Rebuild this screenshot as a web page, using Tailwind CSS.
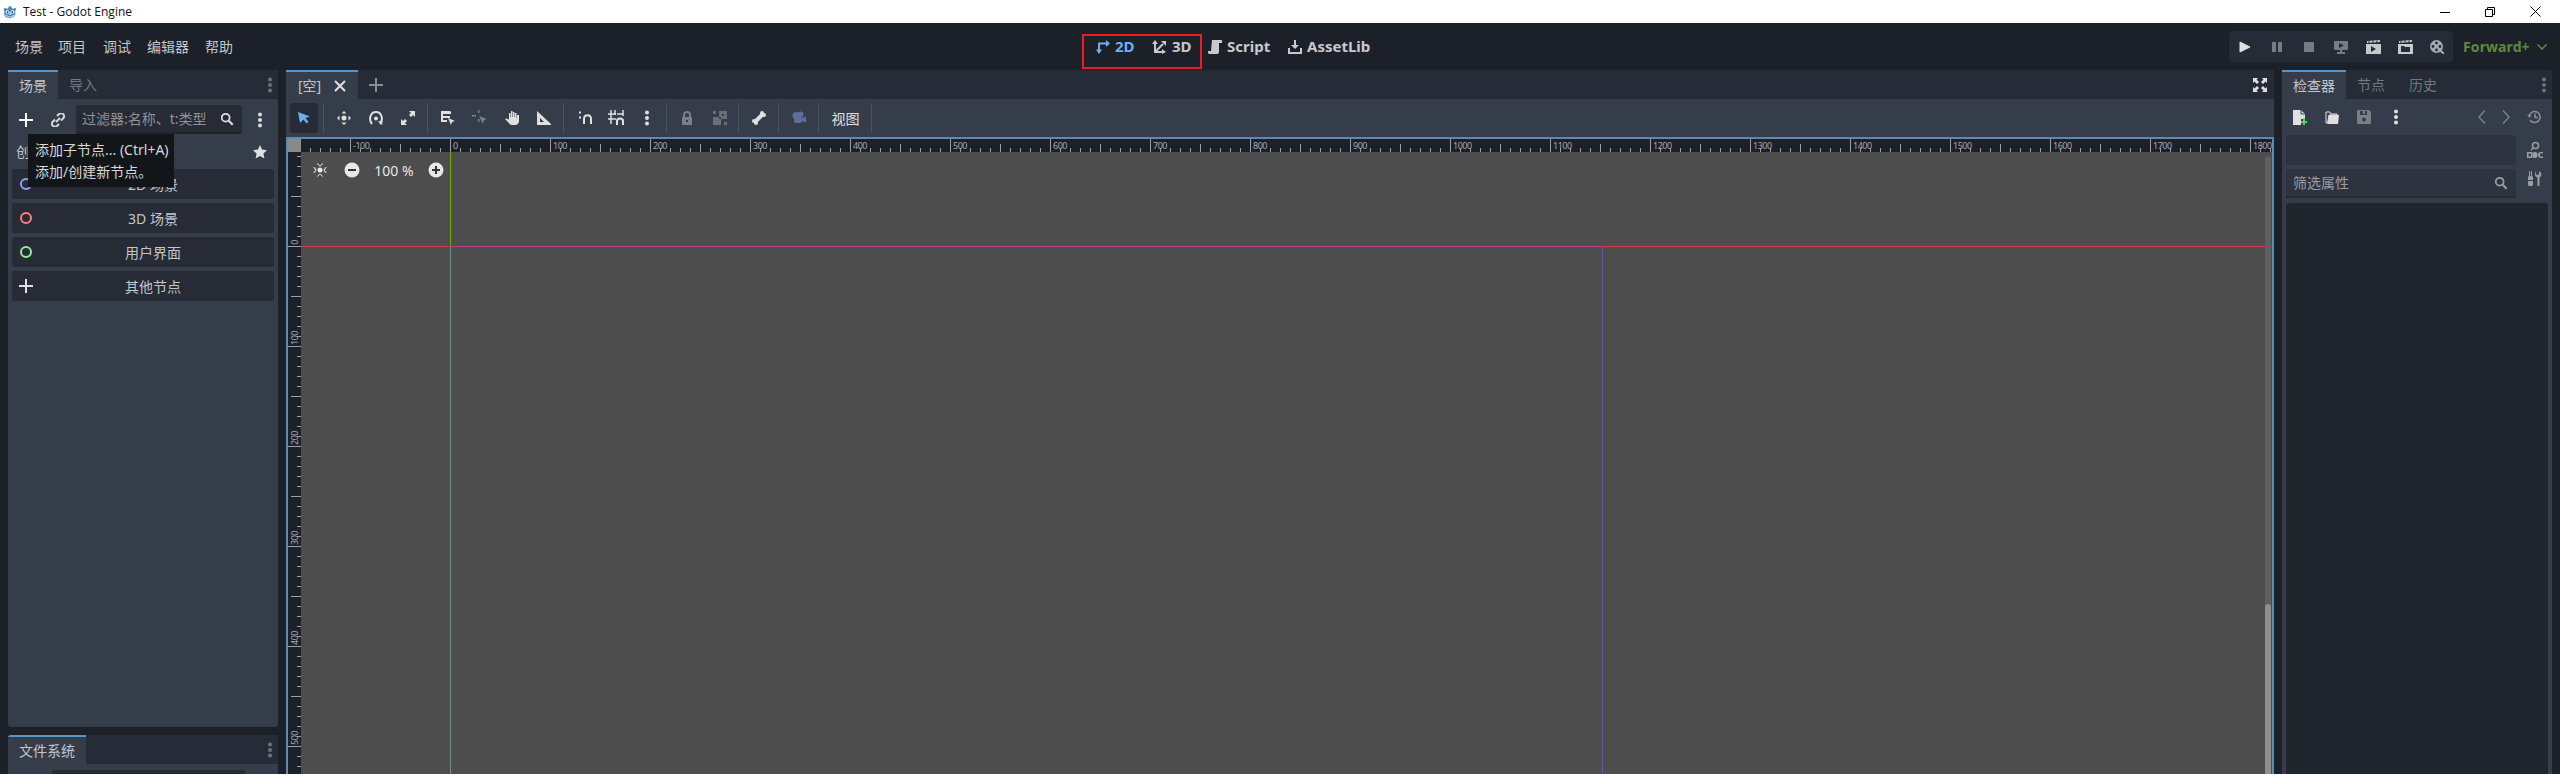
<!DOCTYPE html>
<html lang="zh-CN">

<head>
    <meta charset="UTF-8" />
    <title>Test - Godot Engine</title>
    <script src="https://cdn.jsdelivr.net/npm/@tailwindcss/browser@4"></script>
</head>

<body class="w-[2560px] h-[774px] overflow-hidden bg-[#1c2028] font-['Noto_Sans','Noto_Sans_CJK_SC',sans-serif] text-[14px] text-[#c4c6ca]">

    <svg class="hidden">
        <symbol id="kebab" viewBox="0 0 16 16">
            <circle cx="8" cy="2.5" r="2" fill="currentColor" />
            <circle cx="8" cy="8" r="2" fill="currentColor" />
            <circle cx="8" cy="13.5" r="2" fill="currentColor" />
        </symbol>
        <symbol id="search" viewBox="0 0 16 16">
            <circle cx="6.5" cy="6.5" r="4.5" fill="none" stroke="currentColor" stroke-width="2" />
            <path d="M10 10l4.5 4.5" stroke="currentColor" stroke-width="2.4" />
        </symbol>
    </svg>

    <!-- Заголовок окна -->
    <div class="h-[23px] bg-white flex items-center justify-between text-[12px] text-[#101018] font-['Open_Sans',sans-serif]">
        <div class="flex items-center pl-[3px] gap-[6px]">
            <svg class="w-[14px] h-[14px]" viewBox="0 0 16 16">
                <path d="M1 4l2-1 1 1.500 2-1 .6-2h2.800l.6 2 2 1 1-1.500 2 1-1 3.500v4c-1 2-3.500 3.500-6.500 3.500S2 13.500 1.500 11.500v-4z" fill="#478cbf" />
                <circle cx="5" cy="8" r="2" fill="#fff" />
                <circle cx="11" cy="8" r="2" fill="#fff" />
                <circle cx="5.300" cy="8.200" r="1" fill="#333" />
                <circle cx="10.700" cy="8.200" r="1" fill="#333" />
                <path d="M7 8.500h2v2H7zM2.500 12l3 .5v1h5v-1l3-.5" fill="none" stroke="#fff" stroke-width=".8" />
            </svg>
            <span>Test - Godot Engine</span>
        </div>
        <div class="flex items-center pr-[19px] gap-[35px] text-black">
            <svg class="w-[10px] h-[10px]" viewBox="0 0 10 10"><path d="M0 5.500h10" stroke="currentColor" /></svg>
            <svg class="w-[10px] h-[10px]" viewBox="0 0 10 10" fill="none" stroke="currentColor"><path d="M.5 2.500h7v7h-7zM2.500 2.500v-2h7v7h-2" /></svg>
            <svg class="w-[11px] h-[11px]" viewBox="0 0 11 11" fill="none" stroke="currentColor"><path d="M.5.500l10 10M10.500.500l-10 10" /></svg>
        </div>
    </div>

    <!-- Главное меню -->
    <header class="h-[47px] relative flex items-center justify-between pl-[15px] pr-[13px]">
        <nav class="flex">
            <span class="w-[43px]">场景</span>
            <span class="w-[45px]">项目</span>
            <span class="w-[44px]">调试</span>
            <span class="w-[58px]">编辑器</span>
            <span>帮助</span>
        </nav>

        <div class="absolute left-[1082px] top-[11px] w-[120px] h-[35px] border-2 border-[#ed1c24]"></div>
        <div class="absolute left-[1096px] top-[11px] h-[25px] flex items-center font-bold text-[15px]">
            <div class="flex items-center gap-[5px] w-[56px] text-[#6ab0f0]">
                <svg class="w-[14px] h-[14px]" viewBox="0 0 14 14" fill="none" stroke="currentColor" stroke-width="2"><path d="M3 13V3.500h9" /><path d="M10 0l4 3.500-4 3.500z" fill="currentColor" stroke="none" /><path d="M0 9.500h6L3 14z" fill="currentColor" stroke="none" /></svg>
                <span>2D</span>
            </div>
            <div class="flex items-center gap-[6px] w-[56px] text-[#c7c9cd]">
                <svg class="w-[14px] h-[14px]" viewBox="0 0 14 14" fill="none" stroke="currentColor" stroke-width="2"><path d="M3 3v9h9M3 12l8-8" /><path d="M0 4l3-4 3 4zM10 9l4 3-4 2zM9 1h5v5z" fill="currentColor" stroke="none" /></svg>
                <span>3D</span>
            </div>
            <div class="flex items-center gap-[5px] w-[80px] text-[#c7c9cd]">
                <svg class="w-[14px] h-[14px]" viewBox="0 0 14 14"><path d="M4 0h10v3h-3v9c0 1-1 2-2 2H1c-1 0-1-2-1-3h3z" fill="currentColor" /></svg>
                <span>Script</span>
            </div>
            <div class="flex items-center gap-[5px] text-[#c7c9cd]">
                <svg class="w-[14px] h-[14px]" viewBox="0 0 14 14" fill="currentColor"><path d="M6 0h2v5h3l-4 4-4-4h3zM0 8h2v4h10V8h2v6H0z" /></svg>
                <span>AssetLib</span>
            </div>
        </div>

        <div class="flex items-center">
            <div class="w-[224px] h-[31px] rounded bg-[#262c37] flex items-center text-[#c7c9cd]">
                <span class="w-[32px] flex justify-center"><svg class="w-[14px] h-[14px]" viewBox="0 0 14 14"><path d="M2 2l10 5-10 5z" fill="#e0e0e0" stroke="#e0e0e0" /></svg></span>
                <span class="w-[32px] flex justify-center"><svg class="w-[14px] h-[14px] opacity-50" viewBox="0 0 14 14" fill="currentColor"><path d="M2 2h4v10H2zM8 2h4v10H8z" /></svg></span>
                <span class="w-[32px] flex justify-center"><svg class="w-[14px] h-[14px] opacity-50" viewBox="0 0 14 14" fill="currentColor"><rect x="2" y="2" width="10" height="10" rx="1" /></svg></span>
                <span class="w-[32px] flex justify-center"><svg class="w-[14px] h-[14px] opacity-50" viewBox="0 0 14 14"><path d="M1 1h12c.5 0 1 .5 1 1v7c0 .5-.5 1-1 1H8v2h3v2H3v-2h3v-2H1c-.5 0-1-.5-1-1V2c0-.5.500-1 1-1z" fill="currentColor" /><path d="M5 3l5 2.500L5 8z" fill="#262c37" /></svg></span>
                <span class="w-[32px] flex justify-center"><svg class="w-[15px] h-[14px]" viewBox="0 0 15 14"><path d="M0 4h15v10H0z" fill="currentColor" /><path d="M1 1l13-1v2L1 3z" fill="currentColor" /><path d="M3 .5v2.500M7 .5v2.500M11 .5v2.500" stroke="#262c37" /><path d="M5 6l5 3-5 3z" fill="#262c37" /></svg></span>
                <span class="w-[32px] flex justify-center"><svg class="w-[15px] h-[14px]" viewBox="0 0 15 14"><path d="M0 4h15v10H0z" fill="currentColor" /><path d="M1 1l13-1v2L1 3z" fill="currentColor" /><path d="M3 .5v2.500M7 .5v2.500M11 .5v2.500" stroke="#262c37" /><path d="M3 6h3l1 1h5v5H3z" fill="#262c37" /></svg></span>
                <span class="w-[32px] flex justify-center"><svg class="w-[14px] h-[14px] opacity-80" viewBox="0 0 14 14"><circle cx="6.500" cy="6.500" r="6.500" fill="currentColor" /><circle cx="6.500" cy="3" r="1.400" fill="#262c37" /><circle cx="3" cy="6.500" r="1.400" fill="#262c37" /><circle cx="10" cy="6.500" r="1.400" fill="#262c37" /><circle cx="6.500" cy="10" r="1.400" fill="#262c37" /><path d="M10 10l4 4" stroke="currentColor" stroke-width="2" /></svg></span>
            </div>
            <span class="ml-[10px] w-[66px] font-bold text-[14px] tracking-[0.1px] text-[#5c8c3a] whitespace-nowrap">Forward+</span>
            <svg class="w-[10px] h-[6px] ml-[8px] text-[#5c8c3a]" viewBox="0 0 10 6" fill="none" stroke="currentColor" stroke-width="1.500"><path d="M.5.500L5 5 9.500.500" /></svg>
        </div>
    </header>

    <main class="flex h-[704px] pl-2 gap-2">

        <!-- Левая колонка: сцена и файлы -->
        <div class="w-[270px] h-[704px] flex flex-col gap-2 shrink-0 overflow-hidden">
            <section class="h-[657px] shrink-0 bg-[#363d4a] rounded-b-[3px] relative flex flex-col">
                <div class="h-[29px] bg-[#262c37] flex justify-between rounded-t-[3px]">
                    <div class="flex">
                        <span class="w-[50px] h-[29px] border-t-2 border-[#5a95c8] bg-[#363d4a] text-center leading-[27px]">场景</span>
                        <span class="w-[50px] text-center leading-[29px] text-[#717680]">导入</span>
                    </div>
                    <svg class="w-[16px] h-[16px] mt-[7px] text-[#6f7278]"><use href="#kebab" /></svg>
                </div>
                <div class="h-[35px] flex items-center pl-[11px] pt-[6px] pb-[0px]">
                    <svg class="w-[14px] h-[14px] text-white" viewBox="0 0 14 14"><path d="M6 0h2v6h6v2H8v6H6V8H0V6h6z" fill="currentColor" /></svg>
                    <svg class="w-[14px] h-[14px] ml-[18px] text-[#d5d6d8]" viewBox="0 0 14 14" fill="none" stroke="currentColor" stroke-width="2"><path d="M6 3l2-2c1-1 3.500-1 4.500.5s.5 3-.5 4L10 7.500M8 11l-2 2c-1 1-3 1-4.500-.5S1 9.500 2 8.500L4 6.500M5 9l4-4" /></svg>
                    <div class="ml-[11px] w-[166px] h-[29px] bg-[#262b36] rounded-[3px] flex items-center justify-between pl-[6px] pr-[8px] text-[#8f9297] border-b-2 border-[#20242c]">
                        <span>过滤器:名称、t:类型</span>
                        <svg class="w-[14px] h-[14px] text-[#e0e0e0]"><use href="#search" /></svg>
                    </div>
                    <svg class="w-[16px] h-[16px] ml-[10px] text-[#dcdcdc]"><use href="#kebab" /></svg>
                </div>
                <div class="flex items-center justify-between h-[35px] pl-[8px] pr-[11px] text-[#c4c6ca]">
                    <span>创建根节点：</span>
                    <svg class="w-[14px] h-[14px] text-[#e0e0e0]" viewBox="0 0 14 14"><path d="M7 0l2.100 4.600 4.900.6-3.600 3.400 1 4.900L7 11l-4.400 2.500 1-4.900L0 5.200l4.900-.6z" fill="currentColor" /></svg>
                </div>
                <div class="flex flex-col gap-1 px-1">
                    <div class="h-[30px] bg-[#262b36] rounded-[3px] relative flex items-center justify-center pl-[20px]">
                        <svg class="absolute left-[7px] w-[14px] h-[14px]" viewBox="0 0 14 14"><circle cx="7" cy="7" r="5" fill="none" stroke="#8da5f3" stroke-width="2" /></svg>
                        <span>2D 场景</span>
                    </div>
                    <div class="h-[30px] bg-[#262b36] rounded-[3px] relative flex items-center justify-center pl-[20px]">
                        <svg class="absolute left-[7px] w-[14px] h-[14px]" viewBox="0 0 14 14"><circle cx="7" cy="7" r="5" fill="none" stroke="#fc7f7f" stroke-width="2" /></svg>
                        <span>3D 场景</span>
                    </div>
                    <div class="h-[30px] bg-[#262b36] rounded-[3px] relative flex items-center justify-center pl-[20px]">
                        <svg class="absolute left-[7px] w-[14px] h-[14px]" viewBox="0 0 14 14"><circle cx="7" cy="7" r="5" fill="none" stroke="#8eef97" stroke-width="2" /></svg>
                        <span>用户界面</span>
                    </div>
                    <div class="h-[30px] bg-[#262b36] rounded-[3px] relative flex items-center justify-center pl-[20px]">
                        <svg class="absolute left-[7px] w-[14px] h-[14px] text-[#e0e0e0]" viewBox="0 0 14 14"><path d="M6 0h2v6h6v2H8v6H6V8H0V6h6z" fill="currentColor" /></svg>
                        <span>其他节点</span>
                    </div>
                </div>

                <!-- Подсказка -->
                <div class="absolute left-[20px] top-[64px] w-[146px] h-[53px] bg-[#131619] text-[#d9d9d9] pl-[7px] pt-[5px] leading-[22px] whitespace-nowrap">
                    <p>添加子节点... (Ctrl+A)</p>
                    <p>添加/创建新节点。</p>
                </div>
            </section>

            <section class="h-[39px] shrink-0 bg-[#363d4a] rounded-t-[3px] overflow-hidden">
                <div class="h-[29px] bg-[#262c37] flex justify-between">
                    <span class="w-[78px] h-[29px] border-t-2 border-[#5a95c8] bg-[#363d4a] text-center leading-[27px]">文件系统</span>
                    <svg class="w-[16px] h-[16px] mt-[7px] text-[#6f7278]"><use href="#kebab" /></svg>
                </div>
                <div class="ml-[44px] mt-[6px] w-[194px] h-[10px] bg-[#262b36] rounded-t-[3px]"></div>
            </section>
        </div>

        <!-- Центр: 2D-редактор -->
        <div class="w-[1988px] flex flex-col shrink-0 rounded-t-[3px]">
            <div class="h-[29px] bg-[#262c37] flex items-center justify-between pr-[7px]">
                <div class="flex items-center">
                    <div class="w-[72px] h-[29px] border-t-2 border-[#5a95c8] bg-[#363d4a] flex items-center pl-[12px] gap-[13px]">
                        <span>[空]</span>
                        <svg class="w-[12px] h-[12px] text-[#e0e0e0]" viewBox="0 0 12 12"><path d="M1 1l10 10M11 1L1 11" stroke="currentColor" stroke-width="2" /></svg>
                    </div>
                    <svg class="w-[14px] h-[14px] ml-[11px] text-[#8a8d93]" viewBox="0 0 14 14"><path d="M6 0h2v6h6v2H8v6H6V8H0V6h6z" fill="currentColor" /></svg>
                </div>
                <svg class="w-[14px] h-[14px] text-[#e0e0e0]" viewBox="0 0 14 14" fill="currentColor"><path d="M0 0h5L3.500 1.500 6 4 4 6 1.500 3.500 0 5zM14 0v5l-1.500-1.500L10 6 8 4l2.500-2.500L9 0zM0 14V9l1.500 1.500L4 8l2 2-2.500 2.500L5 14zM14 14H9l1.500-1.500L8 10l2-2 2.500 2.500L14 9z" /></svg>
            </div>

            <!-- Панель инструментов -->
            <div class="h-[38px] bg-[#363d4a] flex items-center pl-[4px] text-[#e0e0e0]">
                <div class="w-[28px] h-[30px] bg-[#262b36] rounded-[3px] flex items-center justify-center">
                    <svg class="w-[14px] h-[14px] text-[#6ab0f0]" viewBox="0 0 14 14"><path d="M1 1l12 4.500-4.500 1.500 3 4-2 1.500-3-4L3 12z" fill="currentColor" /></svg>
                </div>
                <i class="w-px h-[30px] bg-[#4a515e] ml-[5px]"></i>
                <span class="w-[32px] ml-[4px] flex justify-center">
                    <svg class="w-[14px] h-[14px]" viewBox="0 0 14 14" fill="currentColor"><path d="M7 0l2.500 2.500h-5zM7 14l-2.500-2.500h5zM0 7l2.500-2.500v5zM14 7l-2.500 2.500v-5z" /><circle cx="7" cy="7" r="2.500" /></svg>
                </span>
                <span class="w-[32px] flex justify-center">
                    <svg class="w-[14px] h-[14px]" viewBox="0 0 14 14"><path d="M3 13C-.5 9 1 1 7 1s7.500 8 4 12" fill="none" stroke="currentColor" stroke-width="2" /><path d="M9 10.500l4-1 .5 4.500z" fill="currentColor" /><circle cx="7" cy="7.500" r="2" fill="currentColor" /></svg>
                </span>
                <span class="w-[32px] flex justify-center">
                    <svg class="w-[14px] h-[14px]" viewBox="0 0 14 14" fill="currentColor"><path d="M8 0h6v6l-2-2-2 2-2-2 2-2zM0 14V8l2 2 2-2 2 2-2 2 2 2z" /></svg>
                </span>
                <i class="w-px h-[30px] bg-[#4a515e] ml-[3px]"></i>
                <span class="w-[32px] ml-[4px] flex justify-center">
                    <svg class="w-[16px] h-[16px]" viewBox="0 0 16 16" fill="currentColor"><path d="M1 1h9l1 1v2H3v2h7v2H3v2h4v2H1z" /><path d="M8 8l7 3-3 1-1 3z" /></svg>
                </span>
                <span class="w-[32px] flex justify-center">
                    <svg class="w-[16px] h-[16px] text-[#7a7f88]" viewBox="0 0 16 16" fill="currentColor"><path d="M0 5h4v1.500H0zM6 0h1.500v3H6zM6 9h1.500v3H6zM7 6l8 3-3 1-1 4z" /></svg>
                </span>
                <span class="w-[32px] flex justify-center">
                    <svg class="w-[14px] h-[14px]" viewBox="0 0 14 14" fill="currentColor"><path d="M6 0h1.500v6H8V1h1.500v5h.5V2h1.500v5h.5V4H14v6c0 2-1.500 4-4 4H7c-2 0-3-2-4-3L0 8c1-1 2-.5 3 0l1 1V2h1.500v4H6z" /></svg>
                </span>
                <span class="w-[32px] flex justify-center">
                    <svg class="w-[14px] h-[14px]" viewBox="0 0 14 14"><path fill-rule="evenodd" d="M0 0l14 13v1H0zM3 7v4h4z" fill="currentColor" /></svg>
                </span>
                <i class="w-px h-[30px] bg-[#4a515e] ml-[3px]"></i>
                <span class="w-[34px] ml-[4px] flex justify-center">
                    <svg class="w-[14px] h-[14px]" viewBox="0 0 14 14" fill="none" stroke="currentColor"><path d="M1 1.500h2M1 6.500h2" stroke-width="2" /><path d="M6 13V8c0-5 7-5 7 0v5" stroke-width="2" /></svg>
                </span>
                <span class="w-[28px] flex justify-center">
                    <svg class="w-[16px] h-[16px]" viewBox="0 0 16 16" fill="none" stroke="currentColor" stroke-width="1.500"><path d="M0 4h8M0 9h8M3 0v14M7 0v5M15 0v6M9 4h6" /><path d="M9 15v-4c0-3.500 6-3.500 6 0v4" stroke-width="2" /></svg>
                </span>
                <span class="w-[34px] flex justify-center">
                    <svg class="w-[16px] h-[16px]"><use href="#kebab" /></svg>
                </span>
                <i class="w-px h-[30px] bg-[#4a515e] ml-[2px]"></i>
                <span class="w-[36px] ml-[2px] flex justify-center">
                    <svg class="w-[14px] h-[14px] text-[#7a7f88]" viewBox="0 0 14 14" fill="currentColor"><path fill-rule="evenodd" d="M3 6V4a4 4 0 0 1 8 0v2h1v8H2V6zM5 6h4V4a2 2 0 0 0-4 0zM6 9v2h2V9z" /></svg>
                </span>
                <span class="w-[30px] flex justify-center">
                    <svg class="w-[14px] h-[14px] text-[#6a6f78]" viewBox="0 0 14 14" fill="currentColor"><path fill-rule="evenodd" d="M0 0h3v3H0zM6 0h8v8H6zM9 3v2h2V3zM0 6h8v8H0zM11 11h3v3h-3z" /></svg>
                </span>
                <i class="w-px h-[30px] bg-[#4a515e] ml-[3px]"></i>
                <span class="w-[39px] flex justify-center">
                    <svg class="w-[14px] h-[14px]" viewBox="0 0 14 14"><path d="M3 11l8-8" stroke="currentColor" stroke-width="4" /><circle cx="10" cy="2" r="2" fill="currentColor" /><circle cx="12" cy="4" r="2" fill="currentColor" /><circle cx="2" cy="10" r="2" fill="currentColor" /><circle cx="4" cy="12" r="2" fill="currentColor" /></svg>
                </span>
                <i class="w-px h-[30px] bg-[#4a515e]"></i>
                <span class="w-[39px] flex justify-center">
                    <svg class="w-[14px] h-[14px] text-[#5d6d9c]" viewBox="0 0 14 14" fill="currentColor"><circle cx="4" cy="4.500" r="3.500" /><circle cx="8.500" cy="3.500" r="3" /><rect x="2" y="5" width="8" height="7" rx="2" /><path d="M10 7l4-1.500v6L10 10z" /></svg>
                </span>
                <i class="w-px h-[30px] bg-[#4a515e]"></i>
                <span class="w-[52px] pl-[1px] text-center">视图</span>
                <i class="w-px h-[30px] bg-[#4a515e]"></i>
            </div>

            <!-- Вьюпорт -->
            <div class="flex-1 border-2 border-b-0 border-[#5a8bb8] flex flex-col relative overflow-hidden">
                <div class="h-[13px] flex shrink-0 bg-[#1c2028]">
                    <div class="w-[13px] bg-[#8a8a8a] shrink-0"></div>
                    <div id="ruler-x" class="relative flex-1 overflow-hidden">
                        <svg class="absolute inset-0 w-full h-full text-[#9ca0a6]">
                            <defs>
                                <pattern id="ticks-x" x="49" width="100" height="13" patternUnits="userSpaceOnUse">
                                    <path d="M.5 0v13M10.500 9v4M20.500 9v4M30.500 9v4M40.500 9v4M50.500 5v8M60.500 9v4M70.500 9v4M80.500 9v4M90.500 9v4" stroke="currentColor" />
                                </pattern>
                            </defs>
                            <rect width="100%" height="13" fill="url(#ticks-x)" />
                        </svg>
                    </div>
                </div>
                <div class="flex-1 flex">
                    <div id="ruler-y" class="w-[13px] bg-[#1c2028] relative shrink-0 overflow-hidden text-[#9ca0a6]">
                        <svg class="absolute inset-0 w-full h-full">
                            <defs>
                                <pattern id="ticks-y" y="-6" width="13" height="100" patternUnits="userSpaceOnUse">
                                    <path d="M9 10.500h4M9 20.500h4M9 30.500h4M9 40.500h4M3 50.500h10M9 60.500h4M9 70.500h4M9 80.500h4M9 90.500h4M0 .5h13" stroke="currentColor" />
                                </pattern>
                            </defs>
                            <rect width="13" height="100%" fill="url(#ticks-y)" />
                        </svg>
                    </div>
                    <div class="flex-1 bg-[#4d4d4d] relative overflow-hidden">
                        <!-- Оси и рамка проекта -->
                        <i class="absolute left-[149px] top-0 h-[94px] w-px bg-[#78a800]"></i>
                        <i class="absolute left-[149px] top-[95px] bottom-0 w-px bg-[#7a8f80]"></i>
                        <i class="absolute left-0 top-[94px] w-[149px] h-px bg-[#d03a48]"></i>
                        <i class="absolute left-[149px] top-[94px] w-[1152px] h-px bg-[#a34f8e]"></i>
                        <i class="absolute left-[1301px] right-0 top-[94px] h-px bg-[#d03a48]"></i>
                        <i class="absolute left-[1301px] top-[95px] bottom-0 w-px bg-[#5a5aa0]"></i>

                        <!-- Скроллбар -->
                        <div class="absolute right-[1px] top-[4px] bottom-0 w-[6px] rounded-t-[3px] bg-[#5f5f5f]">
                            <div class="mt-[448px] h-[200px] rounded-t-[3px] bg-[#8f8f8f]"></div>
                        </div>

                        <!-- Зум -->
                        <div class="absolute left-[12px] top-[10px] h-[16px] flex items-center text-[#e8e8e8]">
                            <svg class="w-[14px] h-[14px]" viewBox="0 0 14 14" fill="currentColor"><circle cx="7" cy="7" r="2.500" /><path d="M4 0l3 2.500L10 0v1L7 3.500 4 1zM4 14l3-2.500 3 2.500v-1l-3-2.500L4 13zM0 4l2.500 3L0 10l2-.5L3.500 7 2 4.500zM14 4l-2.500 3 2.500 3-2-.5L10.500 7 12 4.500z" /></svg>
                            <svg class="w-[16px] h-[16px] ml-[17px]" viewBox="0 0 16 16"><circle cx="8" cy="8" r="7.500" fill="currentColor" /><path d="M4 7h8v2H4z" fill="#333" /></svg>
                            <span class="w-[68px] text-center text-[14px]">100 %</span>
                            <svg class="w-[16px] h-[16px]" viewBox="0 0 16 16"><circle cx="8" cy="8" r="7.500" fill="currentColor" /><path d="M7 4h2v3h3v2H9v3H7V9H4V7h3z" fill="#333" /></svg>
                        </div>
                    </div>
                </div>
            </div>
        </div>

        <!-- Правая колонка: инспектор -->
        <div class="w-[270px] flex flex-col shrink-0 bg-[#363d4a] rounded-t-[3px]">
            <div class="h-[29px] bg-[#262c37] flex items-center justify-between rounded-t-[3px]">
                <div class="flex items-center">
                    <span class="w-[64px] h-[29px] border-t-2 border-[#5a95c8] bg-[#363d4a] text-center leading-[27px]">检查器</span>
                    <span class="ml-[11px] text-[#717680]">节点</span>
                    <span class="ml-[24px] text-[#717680]">历史</span>
                </div>
                <svg class="w-[16px] h-[16px] text-[#6f7278]"><use href="#kebab" /></svg>
            </div>
            <div class="h-[36px] flex items-center pl-[11px] pr-[11px] text-[#e0e0e0]">
                <svg class="w-[14px] h-[15px]" viewBox="0 0 14 15"><path d="M0 0h8l4 4v5H8v6H0z" fill="currentColor" /><path d="M8 0v4h4" stroke="#363d4a" fill="none" /><path d="M10 8h2v3h2v2h-2v2h-2v-2H8v-2h2z" fill="#5fd35f" /></svg>
                <svg class="w-[14px] h-[14px] ml-[18px]" viewBox="0 0 14 14"><path d="M1 13V2h4l1 2h6v1H4L2.500 13z" fill="none" stroke="currentColor" /><path d="M4 5h10l-1 9H2.500z" fill="currentColor" /></svg>
                <svg class="w-[14px] h-[14px] ml-[18px] text-[#7a7f88]" viewBox="0 0 14 14"><path fill-rule="evenodd" d="M1 0h11l2 2v11l-1 1H1l-1-1V1zM3 1v4h7V1H8v3H6V1z" fill="currentColor" /><circle cx="7" cy="9.500" r="2" fill="#363d4a" /></svg>
                <svg class="w-[16px] h-[16px] ml-[17px]"><use href="#kebab" /></svg>
                <svg class="w-[8px] h-[14px] ml-[74px] text-[#7a7f88]" viewBox="0 0 8 14" fill="none" stroke="currentColor" stroke-width="1.500"><path d="M7 .5L1 7l6 6.500" /></svg>
                <svg class="w-[8px] h-[14px] ml-[16px] text-[#7a7f88]" viewBox="0 0 8 14" fill="none" stroke="currentColor" stroke-width="1.500"><path d="M1 .5L7 7l-6 6.500" /></svg>
                <svg class="w-[14px] h-[14px] ml-[17px] text-[#8a8d93]" viewBox="0 0 14 14" fill="none" stroke="currentColor" stroke-width="1.600"><path d="M2.500 5a5.500 5.500 0 1 1 .5 5" /><path d="M8 3.500v4h3" /><path d="M0 4.500l4.500.5-2 3z" fill="currentColor" stroke="none" /></svg>
            </div>
            <div class="flex pl-1 pr-1 gap-[11px]">
                <div class="w-[230px] flex flex-col gap-1">
                    <div class="h-[30px] bg-[#2e343f] rounded-[3px]"></div>
                    <div class="h-[29px] bg-[#2e343f] rounded-t-[3px] border-b-2 border-[#262a33] flex items-center justify-between pl-[7px] pr-[8px] text-[#9a9da3]">
                        <span>筛选属性</span>
                        <svg class="w-[14px] h-[14px]"><use href="#search" /></svg>
                    </div>
                </div>
                <div class="flex flex-col text-[#9a9da3] gap-[12px] pt-[6px]">
                    <svg class="w-[16px] h-[18px]" viewBox="0 0 16 18" fill="currentColor"><circle cx="8.500" cy="4.500" r="3" fill="none" stroke="currentColor" stroke-width="1.500" /><path d="M6 7L4 9" stroke="currentColor" stroke-width="1.500" /><path fill-rule="evenodd" d="M0 11h4c2 0 2 1 2 3s0 3-2 3H0zM1.500 12.500v3H3c1 0 1-.5 1-1.500s0-1.500-1-1.500zM8 11c2 0 2.500 1 2.500 3s-.5 3-2.500 3-2.500-1-2.500-3 .5-3 2.500-3zM16 11v1.500h-2c-1 0-1 .5-1 1.500s0 1.500 1 1.500h2V17h-2c-2 0-3-1-3-3s1-3 3-3z" /></svg>
                    <svg class="w-[14px] h-[15px] ml-[1px]" viewBox="0 0 14 15" fill="currentColor"><path d="M1 0h1v5h1V0h1v5l1 1v3H0V6l1-1zM0 10h5v3a2.500 2.500 0 0 1-5 0zM8 0v3l1 1h1l1-1V0c2 1 3 3 2 5-.5 1-1 1-1.500 1.500V15h-2V6.500C8 6 7 5 7 3.500 7 2 7.500 1 8 0z" /></svg>
                </div>
            </div>
            <div class="flex-1 mx-1 mt-[5px] bg-[#21252e] rounded-t-[3px]"></div>
        </div>
    </main>

    <!-- Подписи линеек -->
    <script>
        const rulerX = document.getElementById('ruler-x');
        for (let v = -100; v <= 1800; v += 100) {
            const label = document.createElement('span');
            label.className = 'absolute top-0 text-[9px] tracking-[-0.5px] leading-[13px] text-[#a4a7ac]';
            label.style.left = (v + 152) + 'px';
            label.textContent = v;
            rulerX.appendChild(label);
        }

        const rulerY = document.getElementById('ruler-y');
        for (let v = 0; v <= 500; v += 100) {
            const label = document.createElement('span');
            label.className = 'absolute left-0 w-[13px] text-[9px] tracking-[-0.5px] leading-[13px] text-[#a4a7ac] [writing-mode:vertical-rl] rotate-180';
            label.style.bottom = (528 - v + 1) + 'px';
            label.textContent = v;
            rulerY.appendChild(label);
        }
    </script>
</body>

</html>
